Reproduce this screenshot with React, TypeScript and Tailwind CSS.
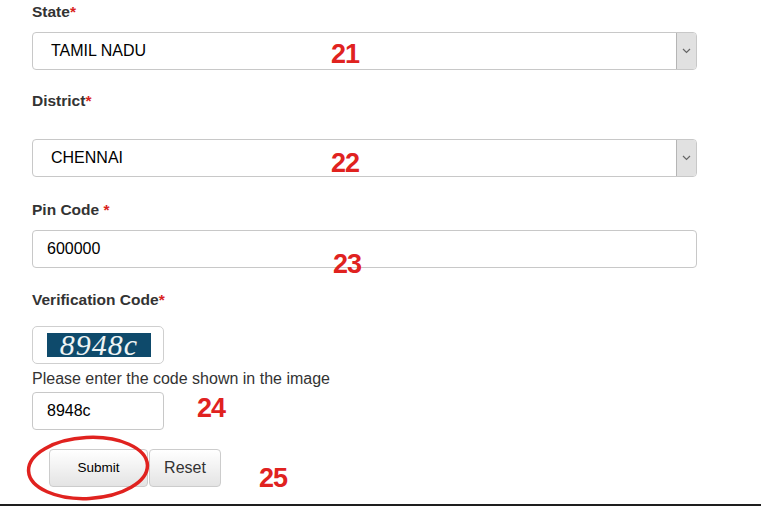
import React from "react";

const Label = ({ text, space }: { text: string; space?: boolean }) => (
  <div className="h-[24px] leading-[24px] text-[15.5px] font-bold text-[#333]">
    {text}
    {space ? " " : ""}
    <span className="text-[#d9231d]">*</span>
  </div>
);

const Select = ({ value }: { value: string }) => (
  <div className="flex h-[38px] w-[665px] overflow-hidden rounded-[4px] border border-[#c8c8c8] bg-white">
    <div className="flex flex-1 items-center pl-[18px] text-[16px] text-black">
      {value}
    </div>
    <div className="flex w-[20px] items-center justify-center border-l border-[#b5b5b5] bg-[#e1e1e1]">
      <svg width="9" height="6" viewBox="0 0 9 6">
        <path d="M1 1 L4.5 4.5 L8 1" fill="none" stroke="#666" strokeWidth="1.2" />
      </svg>
    </div>
  </div>
);

const Num = ({ n, cls }: { n: string; cls: string }) => (
  <div
    className={`absolute text-[27px] leading-none font-bold tracking-[-1px] text-[#e0221f] ${cls}`}
  >
    {n}
  </div>
);

export default function App() {
  return (
    <div className="relative h-[506px] w-[761px] overflow-hidden bg-white font-['Liberation_Sans',Arial,sans-serif]">
      <div className="flex flex-col pl-[32px]">
        <Label text="State" />
        <div className="mt-[8px]">
          <Select value="TAMIL NADU" />
        </div>

        <div className="mt-[19px]">
          <Label text="District" />
        </div>
        <div className="mt-[26px]">
          <Select value="CHENNAI" />
        </div>

        <div className="mt-[21px]">
          <Label text="Pin Code" space />
        </div>
        <div className="mt-[8px] flex h-[38px] w-[665px] items-center rounded-[4px] border border-[#c8c8c8] pl-[14px] text-[16px] text-black">
          600000
        </div>

        <div className="mt-[20px]">
          <Label text="Verification Code" />
        </div>
        <div className="mt-[14px] flex h-[38px] w-[132px] items-center rounded-[5px] border border-[#cfcfcf] pl-[14px]">
          <div className="flex h-[24px] w-[104px] items-center justify-center bg-[#0e4a6b] font-['Liberation_Serif',serif] text-[30px] leading-none italic tracking-[1px] text-[#eef4f4]">
            8948c
          </div>
        </div>
        <div className="mt-[3px] h-[24px] leading-[24px] text-[16px] text-[#333]">
          Please enter the code shown in the image
        </div>
        <div className="mt-[1px] flex h-[38px] w-[132px] items-center rounded-[4px] border border-[#c8c8c8] pl-[14px] text-[16px] text-black">
          8948c
        </div>

        <div className="mt-[19px] ml-[17px] flex gap-[1px]">
          <button className="h-[38px] w-[99px] rounded-[4px] border border-[#cccccc] bg-gradient-to-b from-white to-[#e4e4e4] text-[13.5px] text-black">
            Submit
          </button>
          <button className="h-[38px] w-[72px] rounded-[4px] border border-[#cccccc] bg-gradient-to-b from-white to-[#e4e4e4] text-[16px] text-[#333]">
            Reset
          </button>
        </div>
        <div className="mt-[17px] -ml-[32px] h-[2px] w-[761px] bg-[#1e1e1e]" />
      </div>

      <Num n="21" cls="left-[331px] top-[41px]" />
      <Num n="22" cls="left-[331px] top-[150px]" />
      <Num n="23" cls="left-[333px] top-[251px]" />
      <Num n="24" cls="left-[197px] top-[395px]" />
      <Num n="25" cls="left-[259px] top-[465px]" />

      <svg
        className="absolute left-[26px] top-[435px]"
        width="126"
        height="68"
        viewBox="0 0 126 68"
      >
        <ellipse
          cx="62"
          cy="33"
          rx="59.5"
          ry="30.5"
          fill="none"
          stroke="#e0221f"
          strokeWidth="3.5"
          transform="rotate(-3 62 33)"
        />
      </svg>
    </div>
  );
}
